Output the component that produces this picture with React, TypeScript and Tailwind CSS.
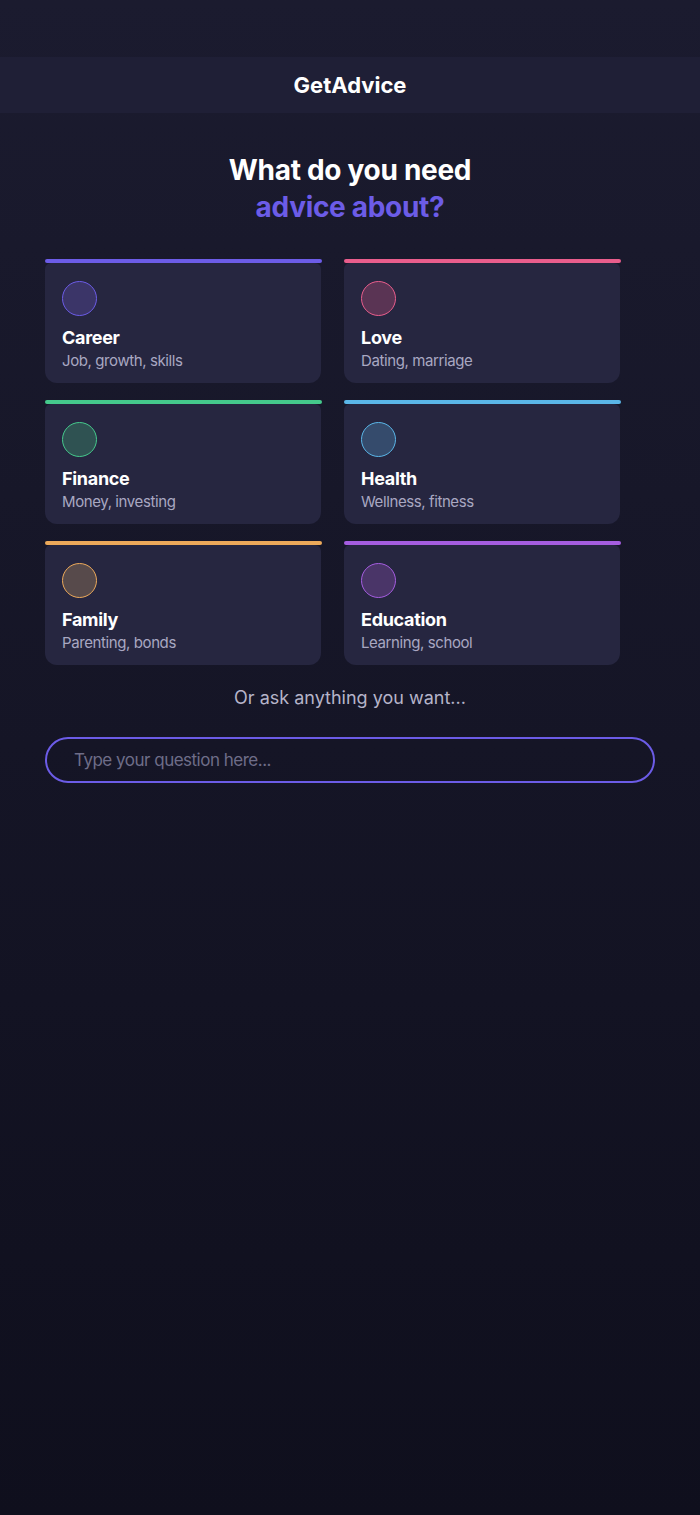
import React from 'react';

type Topic = {
  title: string;
  sub: string;
  bar: string;
  ring: string;
};

const topics: Topic[] = [
  { title: 'Career', sub: 'Job, growth, skills', bar: 'bg-[#6c5ce7]', ring: 'border-[#6c5ce7] bg-[#3b3568]' },
  { title: 'Love', sub: 'Dating, marriage', bar: 'bg-[#e95d8c]', ring: 'border-[#e95d8c] bg-[#5a3454]' },
  { title: 'Finance', sub: 'Money, investing', bar: 'bg-[#45c98c]', ring: 'border-[#45c98c] bg-[#2f5252]' },
  { title: 'Health', sub: 'Wellness, fitness', bar: 'bg-[#5ab6e8]', ring: 'border-[#5ab6e8] bg-[#354b6c]' },
  { title: 'Family', sub: 'Parenting, bonds', bar: 'bg-[#eca95a]', ring: 'border-[#eca95a] bg-[#574a4b]' },
  { title: 'Education', sub: 'Learning, school', bar: 'bg-[#a55de0]', ring: 'border-[#a55de0] bg-[#4a3568]' },
];

const TopicCard: React.FC<{ topic: Topic }> = ({ topic }) => (
  <div className="flex flex-col">
    {/* Colour strip above the card */}
    <div className={`h-1 w-[277px] rounded-full ${topic.bar}`} />
    <div className="bg-[#262640] rounded-b-xl rounded-t-md px-[17px] pt-[18px] pb-[11px]">
      <div className={`w-[35px] h-[35px] rounded-full border-[1.5px] ${topic.ring}`} />
      <div className="mt-[10px] text-[18px] leading-6 font-bold text-white tracking-[-0.3px]">{topic.title}</div>
      <div className="text-[15px] leading-[22px] text-[#a9a8c2] tracking-[-0.4px]">{topic.sub}</div>
    </div>
  </div>
);

export default function App() {
  return (
    <div
      className="min-h-[1515px] bg-gradient-to-b from-[#1b1b2f] to-[#0f0f1d] pt-[57px]"
      style={{ fontFamily: 'Inter, "Noto Sans", sans-serif' }}
    >
      {/* Header */}
      <div className="h-14 bg-[#1f1f36] flex items-center justify-center">
        <span className="text-[22px] font-bold text-white">GetAdvice</span>
      </div>

      {/* Headline */}
      <h1 className="mt-[39px] text-center text-[28px] leading-[37px] font-bold text-white tracking-[-0.3px]">
        What do you need
        <br />
        <span className="text-[#6c5ce7]">advice about?</span>
      </h1>

      {/* Topic grid */}
      <div className="mt-[33px] px-[45px]">
        <div className="grid grid-cols-[276px_276px] gap-x-[23px] gap-y-[17px]">
          {topics.map((t) => (
            <TopicCard key={t.title} topic={t} />
          ))}
        </div>

        <p className="mt-[22px] text-center text-[18px] leading-[22px] text-[#b5b4c9]">
          Or ask anything you want...
        </p>

        <input
          type="text"
          placeholder="Type your question here..."
          className="mt-[28px] w-full h-[46px] rounded-[23px] border-2 border-[#6c5ce7] bg-transparent pl-[27px] text-[17px] tracking-[-0.5px] text-white placeholder:text-[#6e6d88] outline-none"
        />
      </div>
    </div>
  );
}
